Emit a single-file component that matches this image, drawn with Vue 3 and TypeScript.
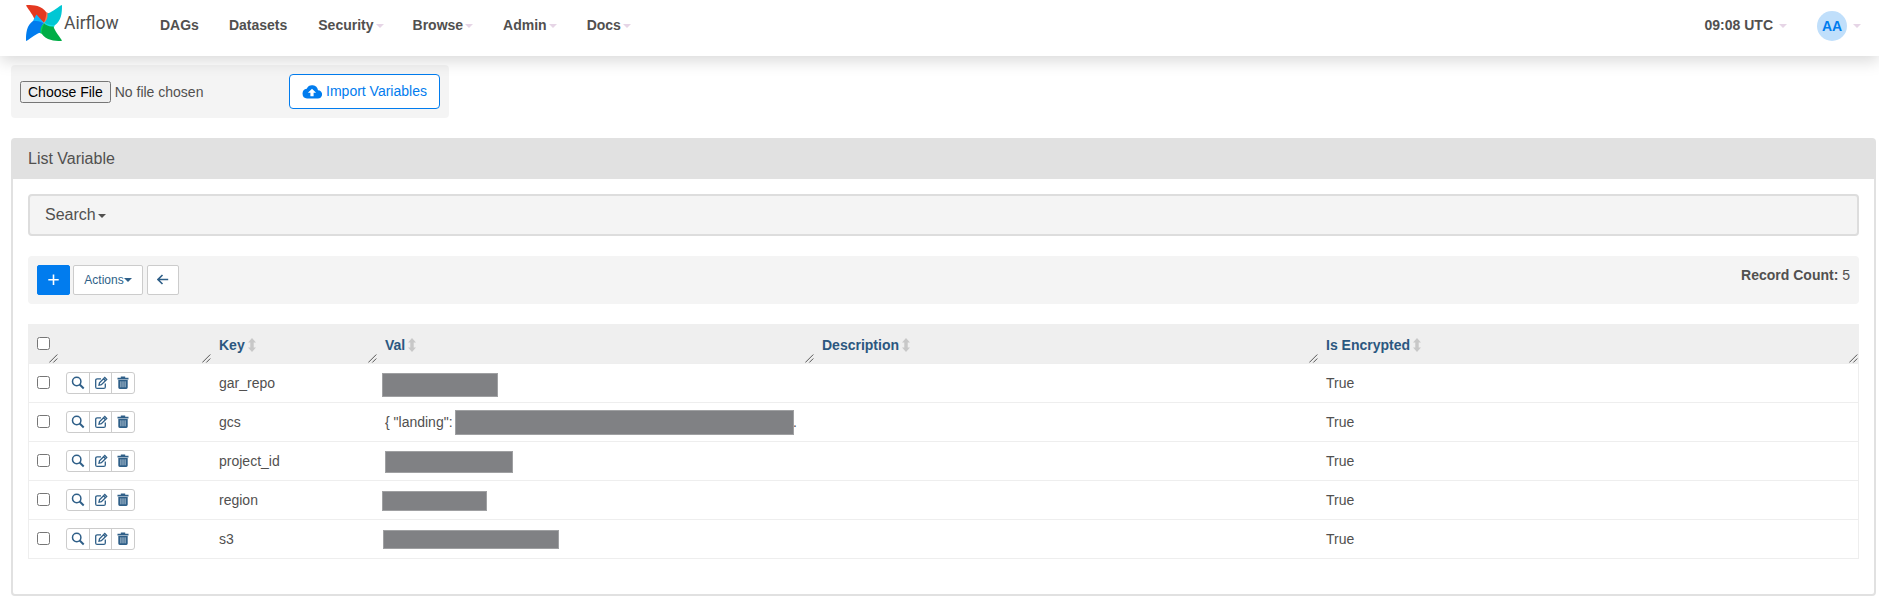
<script setup lang="ts">
interface Mask { left: number; top: number; width: number; height: number }
interface Row { key: string; val: string; tail?: string; mask: Mask }

const links = [
  { label: 'DAGs', menu: false },
  { label: 'Datasets', menu: false },
  { label: 'Security', menu: true },
  { label: 'Browse', menu: true },
  { label: 'Admin', menu: true },
  { label: 'Docs', menu: true },
]
const columns = ['', '', 'Key', 'Val', 'Description', 'Is Encrypted']
const rows: Row[] = [
  { key: 'gar_repo', val: '', mask: { left: 5, top: 9, width: 116, height: 24 } },
  { key: 'gcs', val: '{ "landing":', tail: '.', mask: { left: 78, top: 7, width: 339, height: 25 } },
  { key: 'project_id', val: '', mask: { left: 8, top: 9, width: 128, height: 22 } },
  { key: 'region', val: '', mask: { left: 5, top: 10, width: 105, height: 20 } },
  { key: 's3', val: '', mask: { left: 6, top: 10, width: 176, height: 19 } },
]
const petals = [
  { angle: 0, dark: '#e43921', light: '#ff7557' },
  { angle: 90, dark: '#00c7d4', light: '#11e1ee' },
  { angle: 180, dark: '#00ad46', light: '#04d659' },
  { angle: 270, dark: '#017cee', light: '#0cb6ff' },
]
const maskStyle = (m: Mask) => ({
  left: `${m.left}px`, top: `${m.top}px`, width: `${m.width}px`, height: `${m.height}px`,
})
</script>

<template>
  <div class="page">
    <header class="navbar">
      <div class="brand">
        <svg class="logo" width="36" height="36" viewBox="0 0 36 36">
          <g v-for="p in petals" :key="p.angle" :transform="`rotate(${p.angle} 18 18)`">
            <path :fill="p.light" d="M19.500 7C22.500 8 25 9.500 26.500 10.500L18 18z" />
            <path :fill="p.dark" d="M0 .4Q.2 0 1 0C8 0 15.500 .6 20.300 7.200C20.300 11 19.500 14 18 18C15.500 15.500 13 14 8.500 14.500C7.500 10.500 3.500 6 0 .4z" />
          </g>
        </svg>
        <span class="brand-name">Airflow</span>
      </div>
      <nav class="links">
        <a v-for="l in links" :key="l.label" class="nav-link">{{ l.label }}<i v-if="l.menu" class="caret pale"></i></a>
      </nav>
      <div class="nav-right">
        <a class="clock">09:08 UTC<i class="caret pale"></i></a>
        <a class="user"><span class="avatar">AA</span><i class="caret pale"></i></a>
      </div>
    </header>

    <form class="import">
      <input class="file" type="file" />
      <button class="import-btn" type="button">
        <svg width="20" height="20" viewBox="0 0 20 20"><path fill="#017cee" d="M16 8.200A6 6 0 0 0 4.700 6.700 5 5 0 0 0 5 16.600h10.800a4.200 4.200 0 0 0 .2-8.400zM11.600 10.800v3.400H8.400v-3.400H5.900L10 6.700l4.100 4.100z" /></svg>
        <span>Import Variables</span>
      </button>
    </form>

    <section class="panel">
      <h4 class="panel-title">List Variable</h4>
      <div class="panel-body">
        <div class="search">Search<i class="caret"></i></div>
        <div class="toolbar">
          <button class="btn add" type="button">
            <svg width="12" height="12" viewBox="0 0 12 12"><path stroke="#fff" stroke-width="1.600" d="M5.500 .5v10.400M.3 5.700h10.400" /></svg>
          </button>
          <button class="btn actions" type="button">Actions<i class="caret"></i></button>
          <button class="btn back" type="button">
            <svg width="12" height="12" viewBox="0 0 12 12" fill="none" stroke="#2f5f88" stroke-width="1.600"><path d="M11.200 5.500H1.500M5.500 1L1 5.500l4.500 4.500" /></svg>
          </button>
          <div class="count"><b>Record Count:</b> 5</div>
        </div>
        <div class="table">
          <div class="row head">
            <div v-for="(c, i) in columns" :key="i" class="cell">
              <input v-if="i === 0" type="checkbox" />
              <template v-if="c">
                <span>{{ c }}</span>
                <svg class="sort" width="8" height="14" viewBox="0 0 8 14"><path fill="#c8c8c8" d="M4 0l4 4.500H5.700v5H8L4 14 0 9.500h2.300v-5H0z" /></svg>
              </template>
              <svg class="grip" width="9" height="9" viewBox="0 0 9 9" stroke="#444" stroke-width=".9"><path d="M.3 8.500L8.300.5M4.300 8.500L8.300 4.500" /></svg>
            </div>
          </div>
          <div v-for="r in rows" :key="r.key" class="row">
            <div class="cell"><input type="checkbox" /></div>
            <div class="cell">
              <div class="group">
                <span class="tool"><svg width="14" height="14" viewBox="0 0 14 14" fill="none" stroke="#2f5f88"><circle cx="5.700" cy="5.500" r="4.200" stroke-width="1.500" /><path stroke-width="1.900" d="M8.700 8.500l4 4" /></svg></span>
                <span class="tool"><svg width="14" height="14" viewBox="0 0 14 14" fill="none" stroke="#2f5f88" stroke-width="1.300"><path d="M7 2.800H3.200Q1.700 2.800 1.700 4.300v6.600Q1.700 12.400 3.200 12.400h6.600Q11.300 12.400 11.300 10.900V7.500" /><path d="M5 9.200l.5-2.400 5.300-5.300 1.900 1.900-5.300 5.300zM9.500 2.800l1.900 1.900" /></svg></span>
                <span class="tool"><svg width="14" height="14" viewBox="0 0 14 14"><path fill="#2f5f88" d="M1.500 1.700h3.300V.5h4.400v1.200h3.300v1.800h-11zM2.300 4.100h9.400V11.500Q11.700 12.900 10.300 12.900H3.700Q2.300 12.900 2.300 11.500z" /><path stroke="#d5e0e9" stroke-width=".8" d="M4.900 5.300v6M7 5.300v6M9.100 5.300v6" /></svg></span>
              </div>
            </div>
            <div class="cell">{{ r.key }}</div>
            <div class="cell val"><span>{{ r.val }}</span><span class="tail">{{ r.tail }}</span><i class="mask" :style="maskStyle(r.mask)"></i></div>
            <div class="cell"></div>
            <div class="cell">True</div>
          </div>
        </div>
      </div>
    </section>
  </div>
</template>

<style>
body { margin: 0; background: #fff; overflow: hidden; }
</style>

<style scoped>
* { box-sizing: border-box; }
.page { height: 599px; overflow: hidden; font: 14px/20px "Liberation Sans", Arial, sans-serif; color: #51504f; }
.navbar { position: relative; height: 56px; display: flex; background: #fff; box-shadow: 0 5px 15px rgba(0, 0, 0, .15); }
.brand { width: 145px; display: flex; padding: 5px 0 0 26px; }
.brand-name { font: 17.5px/37px Roboto, sans-serif; margin: 0 0 0 2px; }
.links { display: flex; padding-top: 15px; }
.nav-link { padding: 0 15px; font-weight: bold; white-space: nowrap; }
.nav-link:nth-child(3) { padding-left: 16px; padding-right: 14px; }
.caret { display: inline-block; border: 4px solid transparent; border-top-color: currentColor; border-bottom: 0; margin-left: 2px; vertical-align: middle; }
.pale { color: #e6d5e6; }
.nav-right { margin-left: auto; display: flex; padding-right: 18px; font-weight: bold; }
.clock { padding-top: 15px; margin-right: 30px; }
.clock .caret, .user .caret { margin-left: 6px; }
.user { display: flex; align-items: center; height: 30px; margin-top: 11px; }
.avatar { width: 30px; height: 30px; border-radius: 50%; background: #c0dffb; color: #017cee; text-align: center; line-height: 30px; }
.import { width: 438px; height: 53px; margin: 9px 0 0 11px; padding: 0 9px; display: flex; align-items: center; justify-content: space-between; background: rgba(0, 0, 0, .043); border-radius: 4px; }
.file { font: 14px "Liberation Sans", Arial, sans-serif; width: 240px; color: #51504f; }
.import-btn { height: 35px; width: 151px; display: flex; align-items: center; justify-content: center; gap: 4px; padding: 0; border: 1px solid #017cee; border-radius: 4px; background: #fff; color: #017cee; font: 14px/20px "Liberation Sans", Arial, sans-serif; }
.import-btn span { position: relative; top: -1px; }
.panel { width: 1865px; height: 458px; margin: 20px 0 0 11px; border: 2px solid #e1e1e1; border-radius: 4px; background: #fff; }
.panel-title { margin: 0; height: 39px; padding-left: 15px; background: #e1e1e1; font-size: 16px; line-height: 37px; font-weight: normal; }
.panel-body { padding: 15px; }
.search { height: 42px; border: 2px solid #ddd; border-radius: 4px; background: #f4f4f4; padding-left: 15px; font-size: 16px; line-height: 38px; }
.toolbar { height: 48px; margin: 20px 0; padding: 9px 9px 9px 9px; display: flex; border-radius: 4px; background: #f4f4f4; }
.btn { height: 30px; padding: 0; display: flex; align-items: center; justify-content: center; border: 1px solid #ccc; border-radius: 2px; background: #fff; color: #2f5f88; font: 12px "Liberation Sans", Arial, sans-serif; }
.add { width: 33px; background: #017cee; border-color: #017cee; margin-right: 3px; }
.actions { width: 70px; margin-right: 4px; }
.actions .caret { margin-left: 0; }
.back { width: 32px; }
.count { margin-left: auto; }
.table { border: 1px solid #eee; border-top: 0; }
.row { display: grid; grid-template-columns: 29px 153px 166px 437px 504px 1fr; height: 39px; border-bottom: 1px solid #eee; }
.row:last-child { border-bottom: 0; height: 38px; }
.head { height: 40px; background: #efefef; color: #2b5780; font-weight: bold; margin: 0 -1px; padding: 0 1px; }
.cell { position: relative; padding: 9px 8px; white-space: nowrap; }
.cell input { display: block; width: 13px; height: 13px; margin: 3px 0 0; }
.head .cell { padding-top: 11px; display: flex; align-items: flex-start; }
.head .cell input { margin-top: 2px; }
.sort { margin: 3px 0 0 3px; flex: none; }
.grip { position: absolute; right: 0; bottom: 1px; }
.group { display: inline-flex; height: 22px; width: 69px; margin-top: -1px; border: 1px solid #ccc; border-radius: 3px; }
.tool { flex: 1; display: flex; align-items: center; justify-content: center; }
.tool + .tool { border-left: 1px solid #ccc; }
.val { display: flex; justify-content: space-between; }
.tail { margin-right: 9px; }
.mask { position: absolute; background: #808184; border: 1px solid #9fa0a2; }
</style>
